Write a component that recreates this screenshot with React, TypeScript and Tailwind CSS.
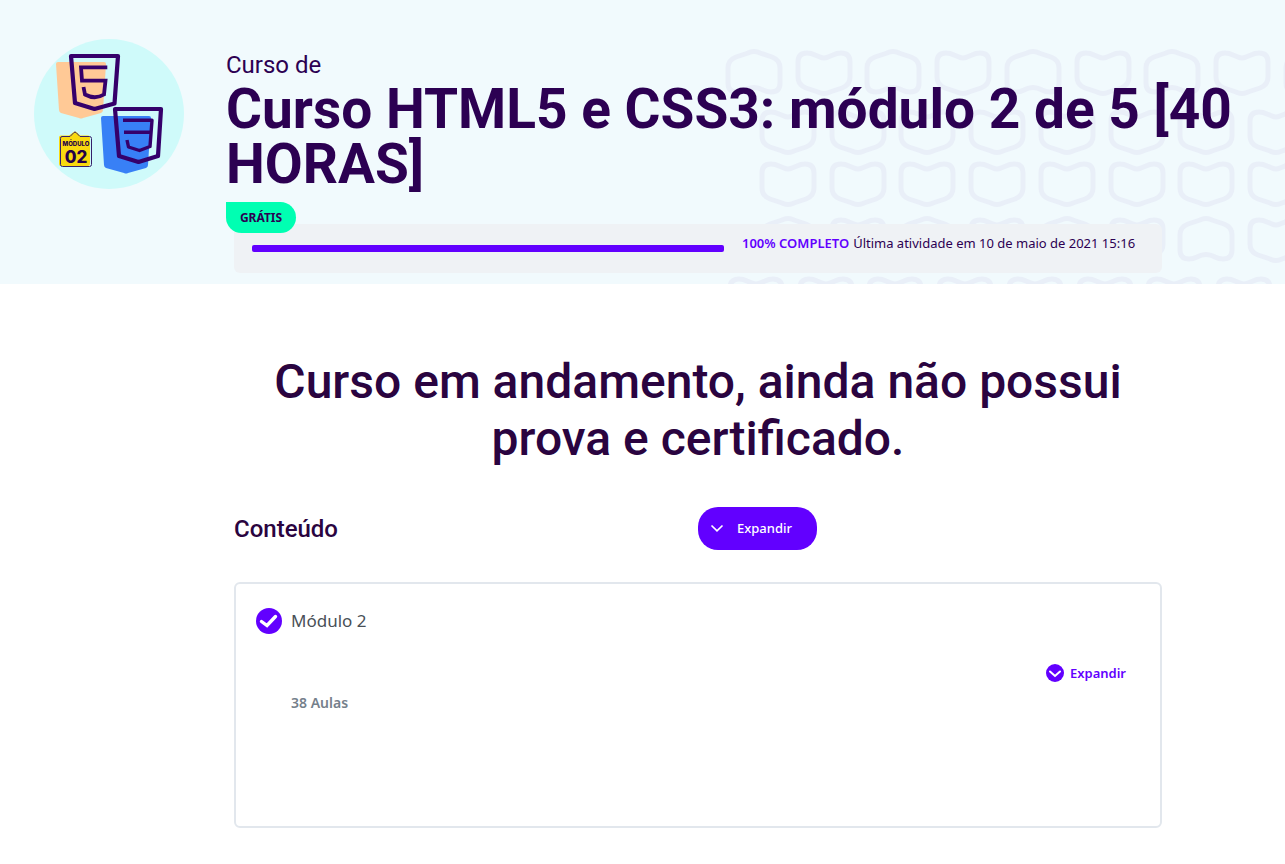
const rows = [
  { x: 1, y: 0, alternate: true },
  { x: 35, y: 60, alternate: false },
  { x: 35, y: 112, alternate: false },
  { x: 35, y: 167, alternate: true },
  { x: 3, y: 227, alternate: false },
];

const PEAK =
  "M22 4 Q28 1 34 4 L46 8 Q54 11 54 19 V34 Q54 43 45 43 Q41 43 37 41 Q28 36 19 41 Q15 43 11 43 Q2 43 2 34 V19 Q2 11 10 8 Z";
const NOTCH =
  "M22 42 Q28 45 34 42 L46 38 Q54 35 54 27 V12 Q54 3 45 3 Q41 3 37 5 L32 7 Q28 9 24 7 L19 5 Q15 3 11 3 Q2 3 2 12 V27 Q2 35 10 38 Z";

function HeaderPattern() {
  return (
    <svg
      className="pointer-events-none absolute right-0 bottom-0"
      width="560"
      height="235"
      viewBox="0 0 560 235"
      fill="none"
      stroke="#e9eff8"
      strokeWidth="5"
      aria-hidden="true"
    >
      {rows.map((row) =>
        Array.from({ length: 9 }, (_, i) => (
          <path
            key={`${row.y}-${i}`}
            d={row.alternate && i % 2 === 0 ? PEAK : NOTCH}
            transform={`translate(${row.x + Math.round(i * 69.7)} ${row.y + (row.alternate && i % 2 === 1 ? 1 : 0)})`}
          />
        )),
      )}
    </svg>
  );
}

function CourseLogo() {
  return (
    <svg className="size-[150px] shrink-0" viewBox="0 0 150 150" role="img" aria-label="HTML5 e CSS3, módulo 02">
      <circle cx="75" cy="75" r="75" fill="#cffafa" />
      <path d="M24 23H70Q72 23 72 25L69 71Q69 73 67 74L49 79Q47 80 45 79L27 74Q25 73 25 71L22 25Q22 23 24 23Z" fill="#ffc996" />
      <path d="M69 77H115Q117 77 117 79L114 126Q114 128 112 129L94 134Q92 135 90 134L72 129Q70 128 70 126L67 79Q67 77 69 77Z" fill="#3880f6" />
      <g fill="none" stroke="#35006b" strokeLinejoin="round">
        <path d="M37 17H84L80.5 64.5L60.5 70L41 64Z" strokeWidth="4.2" />
        <path d="M73.3 28.3H47L48 41.7H71.5L70 55.5Q61 61 51 55.5L49.5 48" strokeWidth="3.8" strokeLinejoin="miter" />
        <path d="M81 70H127L124 117L104.5 123L85 117Z" strokeWidth="4.2" />
        <path d="M89 81.3H118L116 107.5L105.5 111.5L94.5 108L93 101M90 93.3H117" strokeWidth="3.4" />
      </g>
      <path
        d="M27 96.500H35L38.500 94Q41 91 43.500 94L46 96.500H54Q56 96.500 56 98.500V125Q56 127 54 127H27Q25 127 25 125V98.500Q25 96.500 27 96.500Z"
        fill="#f9d90e"
      />
      <path
        d="M28 97.500H36L40 93.500Q41 92.500 42 93.500L46 97.500H55.500Q57.500 97.500 57.500 99.500V125.500Q57.500 127.500 55.500 127.500H28.500Q26.500 127.500 26.500 125.500V99.500Q26.500 97.500 28 97.500Z"
        fill="none"
        stroke="#35206b"
        strokeWidth="1"
      />
      <text x="42" y="107" textAnchor="middle" fill="#250047" className="font-['Inter'] text-[6px] font-extrabold">
        MÓDULO
      </text>
      <text x="42" y="124" textAnchor="middle" fill="#250047" className="font-['Inter'] text-[17px] font-extrabold">
        02
      </text>
    </svg>
  );
}

export default function App() {
  return (
    <div className="min-h-screen bg-white font-['Noto_Sans',sans-serif] text-[#2c0052]">
      <header className="relative overflow-hidden bg-[#f1fafd] pb-[11px]">
        <HeaderPattern />
        <div className="relative flex items-start gap-[42px] pr-8 pl-[34px]">
          <div className="pt-[39px]">
            <CourseLogo />
          </div>
          <div className="min-w-0 flex-1 pt-[51px]">
            <p className="font-['Roboto',sans-serif] text-[24px] leading-[28px]">Curso de</p>
            <h1 className="mt-[3px] font-['Roboto',sans-serif] text-[55px] leading-[55px] font-bold">
              Curso HTML5 e CSS3: módulo 2 de 5 [40 HORAS]
            </h1>
            <span className="relative z-10 mt-[10px] flex h-[31px] w-[70px] items-center justify-center rounded-r-2xl rounded-bl-2xl bg-[#00ffb2] text-[12px] font-bold">
              GRÁTIS
            </span>
            <div className="-mt-[9px] ml-2 flex h-[49px] max-w-[928px] gap-[18px] rounded-md bg-[#eff2f5] pr-4 pl-[18px]">
              <div
                role="progressbar"
                aria-label="Progresso do curso"
                aria-valuenow={100}
                aria-valuemin={0}
                aria-valuemax={100}
                className="mt-[21px] h-[7px] w-[472px] rounded-xs bg-[#6200ff]"
              />
              <p className="pt-[9px] text-[13px] leading-[20px] whitespace-nowrap">
                <strong className="mr-1 font-semibold text-[#6200ff]">100% COMPLETO</strong>
                Última atividade em 10 de maio de 2021 15:16
              </p>
            </div>
          </div>
        </div>
      </header>

      <main className="ml-[234px] max-w-[928px] pt-[69px] pb-9">
        <h2 className="text-center font-['Roboto',sans-serif] text-[48px] leading-[57px] font-medium text-[#2a0440]">
          Curso em andamento, ainda não possui prova e certificado.
        </h2>

        <div className="mt-10 grid grid-cols-2 items-center">
          <h3 className="font-['Roboto',sans-serif] text-[24px] leading-[28px] font-medium text-[#2a0440]">Conteúdo</h3>
          <button
            type="button"
            className="flex h-[43px] w-[119px] items-center gap-[13px] rounded-[20px] bg-[#6200ff] pl-3 text-[13px] font-medium text-white"
          >
            <svg width="14" height="14" viewBox="0 0 14 14" fill="none" stroke="currentColor" strokeWidth="1.7" aria-hidden="true">
              <path d="M1.500 3.500L7 8.800L12.500 3.500" />
            </svg>
            Expandir
          </button>
        </div>

        <section className="mt-8 min-h-[246px] rounded-md border-2 border-[#e2e7ed] pt-[23px] pr-[34px] pl-5">
          <a href="#modulo-2" className="flex items-center gap-[9px] text-[17px] leading-[28px] text-[#495057]">
            <svg width="26" height="26" viewBox="0 0 26 26" fill="none" aria-hidden="true">
              <circle cx="13" cy="13" r="13" fill="#6200ff" />
              <path d="M5.500 13.500L11 17.500L19.500 8.500" stroke="white" strokeWidth="3.4" strokeLinecap="round" />
            </svg>
            Módulo 2
          </a>
          <div className="mt-7 flex justify-end">
            <button type="button" className="flex items-center gap-[6px] text-[13px] leading-[20px] font-semibold text-[#6200ff]">
              <svg width="18" height="18" viewBox="0 0 18 18" fill="none" aria-hidden="true">
                <circle cx="9" cy="9" r="9" fill="#6200ff" />
                <path d="M4 7.500L9 12L14 7.500" stroke="white" strokeWidth="2" strokeLinecap="round" />
              </svg>
              Expandir
            </button>
          </div>
          <p className="mt-[10px] pl-[35px] text-[14px] leading-[20px] font-semibold text-[#75808b]">38 Aulas</p>
        </section>
      </main>
    </div>
  );
}
